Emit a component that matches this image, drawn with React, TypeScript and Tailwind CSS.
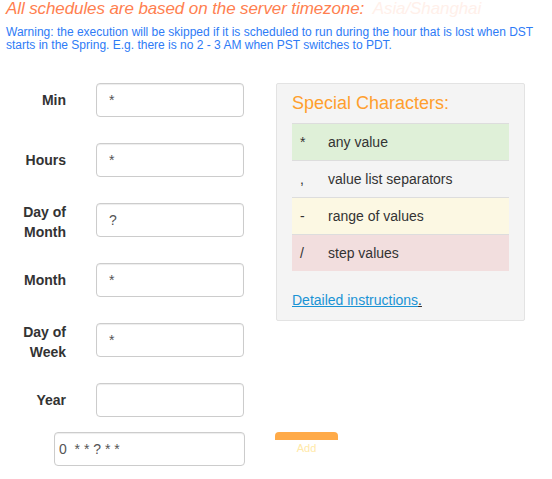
import React from "react";

const font = { fontFamily: '"Liberation Sans", Arial, sans-serif' };

function Row({ label, value, two }: { label: React.ReactNode; value: string; two?: boolean }) {
  return (
    <div className="flex items-center h-[34px]">
      <div
        className={
          "w-[66px] text-right text-[14px] leading-[20px] font-bold text-[#333] " +
          (two ? "pt-[4px]" : "")
        }
      >
        {label}
      </div>
      <input
        readOnly
        value={value}
        className="ml-[30px] h-[34px] w-[148px] rounded-[4px] border border-[#ccc] bg-white px-[12px] text-[14px] text-[#555] shadow-[inset_0_1px_1px_rgba(0,0,0,0.075)] outline-none"
        style={font}
      />
    </div>
  );
}

export default function App() {
  const rows = [
    { sym: "*", desc: "any value", bg: "bg-[#dff0d8]" },
    { sym: ",", desc: "value list separators", bg: "" },
    { sym: "-", desc: "range of values", bg: "bg-[#fcf8e3]" },
    { sym: "/", desc: "step values", bg: "bg-[#f2dede]" },
  ];
  return (
    <div className="w-[552px] h-[479px] overflow-hidden bg-white" style={font}>
      <div className="px-[6px]">
        <div className="h-[18px] text-[17px] leading-[18px] italic tracking-[-0.1px] text-[#ff7f50] whitespace-nowrap">
          All schedules are based on the server timezone:{" "}
          <span className="ml-[4px] text-[#fff0ea]">Asia/Shanghai</span>
        </div>
        <div className="mt-[8px] text-[12px] leading-[13px] text-[#2e7bf6]">
          Warning: the execution will be skipped if it is scheduled to run during the hour that is lost when DST
          <br />
          starts in the Spring. E.g. there is no 2 - 3 AM when PST switches to PDT.
        </div>
      </div>

      <div className="mt-[31px] flex items-start">
        <div className="flex w-[244px] flex-col gap-[26px]">
          <Row label="Min" value="*" />
          <Row label="Hours" value="*" />
          <Row label={<>Day of<br />Month</>} value="?" two />
          <Row label="Month" value="*" />
          <Row label={<>Day of<br />Week</>} value="*" two />
          <Row label="Year" value="" />
          <div className="mt-[-11px] flex items-start">
            <input
              readOnly
              value="0  * * ? * *"
              className="ml-[54px] h-[34px] w-[195px] rounded-[4px] border border-[#ccc] bg-white px-[4px] text-[14px] text-[#555] shadow-[inset_0_1px_1px_rgba(0,0,0,0.075)] outline-none whitespace-pre"
              style={font}
            />
          </div>
        </div>

        <div className="ml-[32px] w-[249px] rounded-[2px] border border-[#e3e3e3] bg-[#f4f4f4] px-[15px] pt-[9px] pb-[10px]">
          <div className="text-[18px] leading-[20px] text-[#ff9f2e]">Special Characters:</div>
          <div className="mt-[10px]">
            {rows.map((r) => (
              <div key={r.desc} className={"flex border-t border-[#ddd] px-[8px] py-[8px] text-[14px] leading-[20px] text-[#333] " + r.bg}>
                <div className="w-[28px]">{r.sym}</div>
                <div>{r.desc}</div>
              </div>
            ))}
          </div>
          <div className="mt-[19px] text-[14px] leading-[20px]">
            <span className="text-[#1a93d4] underline">Detailed instructions</span>
            <span className="text-[#333] underline">.</span>
          </div>
        </div>
      </div>

      <div className="relative">
        <div className="absolute left-[275px] top-[-34px] h-[34px] w-[63px]">
          <div className="h-[8px] rounded-t-[4px] bg-[#ffaa48]" />
          <div className="mt-[2px] text-center text-[11px] leading-[12px] text-[#ffe9a8]">Add</div>
        </div>
      </div>
    </div>
  );
}
